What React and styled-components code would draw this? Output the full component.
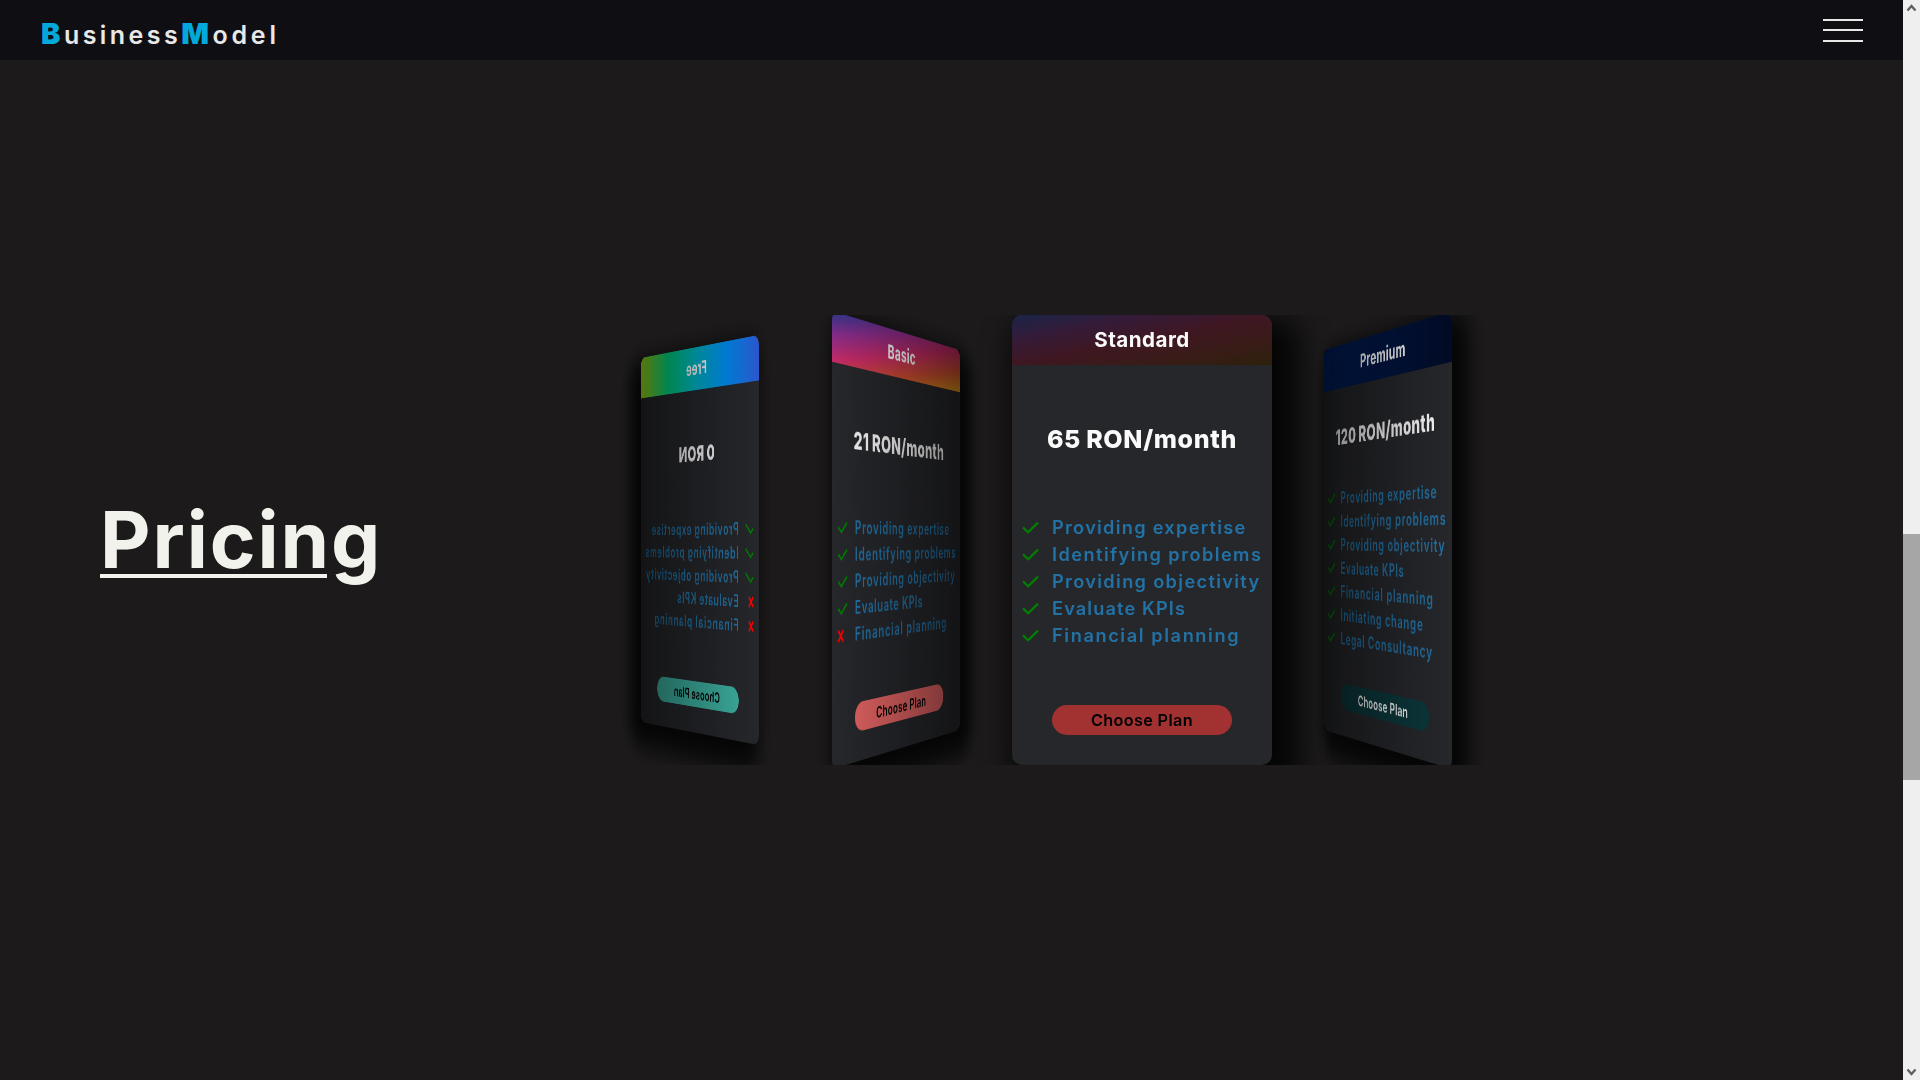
import React from "react";
import styled, { createGlobalStyle } from "styled-components";

const GlobalStyle = createGlobalStyle`
  *, *::before, *::after { box-sizing: border-box; }
  html, body { margin: 0; padding: 0; overflow: hidden; background: #1c1a1a; }
  body { font-family: Inter, "Open Sans", sans-serif; }
  ul { list-style: none; margin: 0; padding: 0; }
`;

const Screen = styled.div`
  display: flex;
  width: 100vw;
  height: 100vh;
  background: #1c1a1a;
`;

const Page = styled.div`
  flex: 1;
  min-width: 0;
  display: flex;
  flex-direction: column;
`;

const Header = styled.header`
  flex: none;
  height: 60px;
  padding: 0 40px;
  display: flex;
  align-items: center;
  justify-content: space-between;
  background: #0f0e13;
`;

const Logo = styled.a`
  display: flex;
  align-items: baseline;
  padding: 6px 0 0 1px;
  color: #e8e8e8;
  line-height: 1;
`;

const Initial = styled.span`
  font-size: 29px;
  font-weight: 900;
  letter-spacing: 3.5px;
  color: #04a9dc;
`;

const LogoText = styled.span`
  font-size: 25px;
  font-weight: 600;
  letter-spacing: ${(p) => p.$track}px;
`;

const MenuButton = styled.button`
  width: 40px;
  padding: 0;
  border: 0;
  background: none;
  display: flex;
  flex-direction: column;
  gap: 8px;
`;

const MenuLine = styled.span`
  height: 2px;
  background: #e8e8e8;

  &:last-child { margin-top: 1px; }
`;

const Pricing = styled.section`
  flex: 1;
  display: flex;
  align-items: center;
  padding: 0 100px 60px;
`;

const TitleColumn = styled.div`
  flex: none;
  width: 381px;
`;

const Title = styled.h2`
  position: relative;
  width: max-content;
  margin: 0;
  font-size: 78px;
  font-weight: 660;
  line-height: 120px;
  letter-spacing: 1.9px;
  color: #f1f2ec;

  &::after {
    content: "";
    position: absolute;
    left: 0;
    top: 94px;
    width: 227px;
    height: 4px;
    background: #f6f3ee;
  }
`;

const Carousel = styled.div`
  flex: 1;
  height: 450px;
  padding-left: 11px;
  display: flex;
  overflow: hidden;
  perspective: 1200px;
`;

const Slide = styled.article`
  position: relative;
  flex: none;
  width: 260px;
  height: 450px;
  display: flex;
  flex-direction: column;
  border-radius: 10px;
  background: #26272b;
  box-shadow: 14px 16px 30px 13px rgba(0, 0, 0, 0.82);
  z-index: ${(p) => 5 - Math.abs(p.$step)};
  transform: translateZ(${(p) => -100 * Math.abs(p.$step)}px)
    rotateY(${(p) => 70 * p.$step}deg);

  &::after {
    content: "";
    position: absolute;
    inset: 0;
    border-radius: 4px;
    pointer-events: none;
    background: ${(p) =>
      p.$step === 0
        ? "none"
        : `linear-gradient(to ${p.$step > 0 ? "left" : "right"}, rgba(0, 0, 0, 0.5), transparent)`};
  }
`;

const SlideHeader = styled.header`
  flex: none;
  height: 50px;
  padding-bottom: 1px;
  display: flex;
  align-items: center;
  justify-content: center;
  border-radius: 10px 10px 0 0;
  background: ${(p) => p.$fill};
  color: #fafafa;
  font-size: 20.6px;
  font-weight: 650;
  letter-spacing: 0.5px;
`;

const SlideBody = styled.div`
  flex: 1;
  display: flex;
  flex-direction: column;
  align-items: center;
  justify-content: space-between;

  &::before { content: ""; }
`;

const Price = styled.div`
  color: #fafafa;
  font-size: 25px;
  font-weight: 850;
  line-height: 36px;
  padding-bottom: 1.5px;
  letter-spacing: 0.65px;
  word-spacing: -1px;
  white-space: nowrap;
`;

const Features = styled.ul`
  align-self: stretch;
`;

const Feature = styled.li`
  display: grid;
  grid-template-columns: 30px 1fr;
  align-items: center;
  height: 27px;
  padding-left: 10px;
  color: #2372a5;
  font-size: 18.2px;
  font-weight: 640;
  line-height: 27px;
  letter-spacing: ${(p) => p.$track}px;
  white-space: nowrap;

  svg { display: block; }
`;

const PlanButton = styled.button`
  flex: none;
  align-self: center;
  width: 180px;
  height: 30px;
  margin-bottom: 30px;
  padding: 0;
  border: 0;
  border-radius: 15px;
  background: ${(p) => p.$fill};
  color: ${(p) => p.$ink};
  font: 600 16.2px Inter, sans-serif;
  letter-spacing: 0.35px;
`;

const Scrollbar = styled.div`
  flex: none;
  width: 17px;
  display: flex;
  flex-direction: column;
  align-items: center;
  justify-content: space-between;
  background: #efefef;
`;

const ScrollTrack = styled.div`
  flex: 1;
  align-self: stretch;
  padding-top: 517px;
`;

const Thumb = styled.div`
  height: 246px;
  background: #a6a6a6;
`;

const Included = () => (
  <svg width="17" height="13" viewBox="0 0 17 13" fill="none">
    <path d="M1 6.4 6.2 11.2 16 1.6" stroke="#008000" strokeWidth="2.2" />
  </svg>
);

const Excluded = () => (
  <svg width="11" height="13" viewBox="0 0 11 13" fill="none">
    <path d="M1 1 9.5 12M9.5 1 1 12" stroke="#ff0000" strokeWidth="2.6" />
  </svg>
);

const Arrow = ({ d }) => (
  <svg width="17" height="17" viewBox="0 0 17 17" fill="none">
    <path d={d} stroke="#606060" strokeWidth="2.4" />
  </svg>
);

const FEATURES = [
  ["Providing expertise", 1.28],
  ["Identifying problems", 1.44],
  ["Providing objectivity", 1.33],
  ["Evaluate KPIs", 1.12],
  ["Financial planning", 1.6],
  ["Initiating change", 1.4],
  ["Legal Consultancy", 1.4],
];

const PLANS = [
  {
    name: "Free", price: "0 RON", step: 2, rows: 5, included: 3,
    header: "linear-gradient(to right, #2b56cc, #008af0, #00b4c8, #00d680, #b0eb14)",
    button: "#3db0a0", ink: "#000",
  },
  {
    name: "Basic", price: "21 RON/month", step: 1, rows: 5, included: 4,
    header: "linear-gradient(to bottom right, #2b3488, #862b86, #c42a64, #d0502f, #dc9a14)",
    button: "#e06262", ink: "#000",
  },
  {
    name: "Standard", price: "65 RON/month", step: 0, rows: 5, included: 5,
    header: "linear-gradient(to bottom right, #1a2449, #341b38, #3f1722, #391c18, #2d200c)",
    button: "#a23232", ink: "#000",
  },
  {
    name: "Premium", price: "120 RON/month", step: -1, rows: 7, included: 7,
    header: "linear-gradient(to right, #002060, #020a24)",
    button: "#0c373b", ink: "#fafafa",
  },
];

const PlanSlide = ({ plan }) => (
  <Slide $step={plan.step}>
    <SlideHeader $fill={plan.header}>{plan.name}</SlideHeader>
    <SlideBody>
      <Price>{plan.price}</Price>
      <Features>
        {FEATURES.slice(0, plan.rows).map(([label, track], i) => (
          <Feature key={label} $track={track}>
            {i < plan.included ? <Included /> : <Excluded />}
            {label}
          </Feature>
        ))}
      </Features>
      <PlanButton $fill={plan.button} $ink={plan.ink}>Choose Plan</PlanButton>
    </SlideBody>
  </Slide>
);

export default function App() {
  return (
    <>
      <GlobalStyle />
      <Screen>
        <Page>
          <Header>
            <Logo>
              <Initial>B</Initial>
              <LogoText $track={3.45}>usiness</LogoText>
              <Initial>M</Initial>
              <LogoText $track={3.8}>odel</LogoText>
            </Logo>
            <MenuButton aria-label="Menu">
              <MenuLine />
              <MenuLine />
              <MenuLine />
            </MenuButton>
          </Header>
          <Pricing>
            <TitleColumn>
              <Title>Pricing</Title>
            </TitleColumn>
            <Carousel>
              {PLANS.map((plan) => (
                <PlanSlide key={plan.name} plan={plan} />
              ))}
            </Carousel>
          </Pricing>
        </Page>
        <Scrollbar>
          <Arrow d="M4.5 10.5 8.5 6 12.5 10.5" />
          <ScrollTrack>
            <Thumb />
          </ScrollTrack>
          <Arrow d="M4.5 6.5 8.5 11 12.5 6.5" />
        </Scrollbar>
      </Screen>
    </>
  );
}
